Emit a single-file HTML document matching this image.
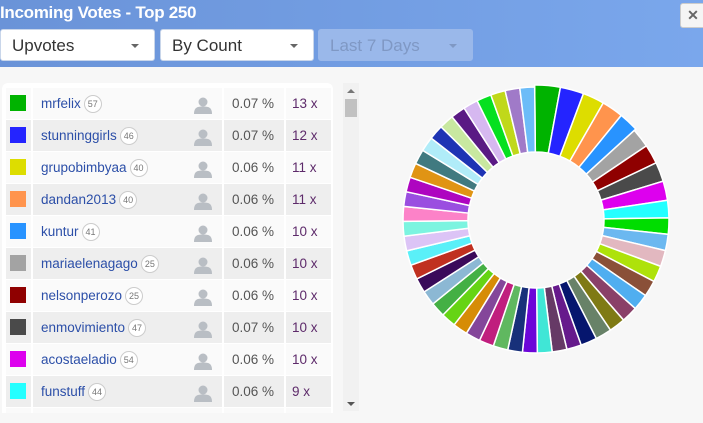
<!DOCTYPE html>
<html><head><meta charset="utf-8"><style>
*{box-sizing:border-box;margin:0;padding:0}
body{width:703px;height:423px;overflow:hidden;background:#f7f7f7;font-family:"Liberation Sans",sans-serif;position:relative}
.hdr{position:absolute;left:0;top:0;width:703px;height:67px;background:linear-gradient(90deg,#6a93d8,#7aa7ec)}
.title{position:absolute;left:0;top:3px;color:#fff;font-weight:bold;font-size:17px;letter-spacing:-0.3px}
.sel{position:absolute;top:29px;height:32px;background:#fff;border:1px solid #c9d6ea;border-radius:3px;font-size:17px;color:#333;padding:6px 11px}
.sel:after{content:"";position:absolute;right:15px;top:14px;border-left:4px solid transparent;border-right:4px solid transparent;border-top:4px solid #666}
.dis{background:#9ab8ea;border-color:#9ab8ea;color:#7f98c4}
.dis:after{border-top-color:#7f98c4}
.close{position:absolute;left:680px;top:3px;width:26px;height:25px;background:#f5f5f5;border:1px solid #ccc;border-radius:3px;color:#666;font-weight:bold;font-size:14px;text-align:center;line-height:22px}
.panel{position:absolute;left:2px;top:83px;width:331px;height:330px;background:#fff;border-radius:6px 6px 0 0;overflow:hidden}
.row{position:absolute;left:4px;width:325px;height:31px;font-size:13.5px;color:#555}
.row.a{background:#fafafa}.row.b{background:#eee}
.row div{position:absolute;top:0;height:31px;line-height:31px}
.sw{left:4px;top:7px!important;width:16px;height:16px!important}
.c1{left:25px;width:1px;background:#fff}
.nm{left:35px;color:#2c4fa8}
.bd{display:inline-block;width:18px;height:18px;border:1px solid #ccc;border-radius:9px;font-size:9px;line-height:16px;text-align:center;color:#777;vertical-align:middle;margin-left:3px;background:#fff}
.usr{left:188px;top:6px!important;width:18px;height:17px!important}
.pc{left:226px}
.ct{left:286px;color:#5d2a6a}
.sep1,.sep2{width:2px;background:#fff}
.sep1{left:216px}.sep2{left:278px}
.sb{position:absolute;left:343px;top:83px;width:16px;height:328px;background:#f1f1f1}
.thumb{position:absolute;left:2px;top:16px;width:12px;height:18px;background:#c1c1c1}
</style></head><body>
<div class="hdr">
<div class="title">Incoming Votes - Top 250</div>
<div class="sel" style="left:0;width:155px">Upvotes</div>
<div class="sel" style="left:160px;width:154px">By Count</div>
<div class="sel dis" style="left:318px;width:155px">Last 7 Days</div>
<div class="close">✕</div>
</div>
<div class="panel" id="panel"></div>
<div class="sb"><div style="position:absolute;left:4px;top:6px;border-left:4px solid transparent;border-right:4px solid transparent;border-bottom:4px solid #777"></div><div class="thumb"></div><div style="position:absolute;left:4px;top:319px;border-left:4px solid transparent;border-right:4px solid transparent;border-top:4px solid #555"></div></div>
<svg id="pie" style="position:absolute;left:0;top:0" width="703" height="423"></svg>
<script>
var rows=[["#00b300","mrfelix",57,"0.07",13],["#2424ff","stunninggirls",46,"0.07",12],["#dddd00","grupobimbyaa",40,"0.06",11],["#ff944d","dandan2013",40,"0.06",11],["#2893ff","kuntur",41,"0.06",10],["#a3a3a3","mariaelenagago",25,"0.06",10],["#8f0000","nelsonperozo",25,"0.06",10],["#4a4a4a","enmovimiento",47,"0.07",10],["#dd00ee","acostaeladio",54,"0.06",10],["#24ffff","funstuff",44,"0.06",9],["#00dd00","x",40,"0.06",9]];
var p=document.getElementById('panel'),h='';
var person='<svg viewBox="0 0 18 17" width="18" height="17"><circle cx="9" cy="5" r="4.5" fill="#b9bec4"/><path d="M0 17 C0 10 4 9.5 9 9.5 C14 9.5 18 10 18 17Z" fill="#b9bec4"/></svg>';
rows.forEach(function(r,i){var y=5+i*32;h+='<div class="row '+(i%2?'b':'a')+'" style="top:'+y+'px"><div class="sw" style="background:'+r[0]+'"></div><div class="c1" style="width:2px;left:25px;background:#fff"></div>'+(i<10?'<div class="nm">'+r[1]+'<span class="bd">'+r[2]+'</span></div><div class="usr">'+person+'</div><div class="pc">'+r[3]+' %</div><div class="ct">'+r[4]+' x</div>':'')+'<div class="sep1"></div><div class="sep2"></div></div>';});
p.innerHTML=h;
var cols=["#00b300","#2424ff","#dddd00","#ff944d","#2893ff","#a3a3a3","#8f0000","#4a4a4a","#dd00ee","#24ffff","#00dd00","#6bb8f0","#e2b8c0","#aee20a","#8a5038","#50aef0","#8a4068","#7f7a14","#688268","#06166e","#661a8c","#663a66","#40e6d6","#6c06d8","#18307a","#60b860","#c01e7e","#84469a","#d68c06","#66d414","#44b044","#8cb8d4","#3a0a5a","#c03020","#5af0f8","#dcc4f6","#7cf4e0","#fc82c8","#9a4ee0","#ae06c0","#e09414","#407a80","#b0ecf8","#1e34b4","#c8e8a0","#5a1a84","#d6b8f0","#06e020","#c0d81a","#a07ac8","#6cbcf8"];
var w=[13,12,11,11,10,10,10,10,10,9];while(w.length<cols.length)w.push(w.length<20?8.4:7.6);
var tot=w.reduce(function(a,b){return a+b},0),cx=536,cy=220,R=135,r=68,a=-Math.PI/2-0.01,s='';
function pt(rad,an){return (cx+rad*Math.cos(an)).toFixed(2)+' '+(cy+rad*Math.sin(an)).toFixed(2)}
w.forEach(function(v,i){var b=a+v/tot*2*Math.PI;var rr=R-(i<5?0:2);s+='<path d="M'+pt(r,a)+' L'+pt(rr,a)+' A'+rr+' '+rr+' 0 0 1 '+pt(rr,b)+' L'+pt(r,b)+' A'+r+' '+r+' 0 0 0 '+pt(r,a)+'Z" fill="'+cols[i]+'" stroke="#fff" stroke-width="1.5"/>';a=b;});
document.getElementById('pie').innerHTML=s;
</script>
</body></html>
